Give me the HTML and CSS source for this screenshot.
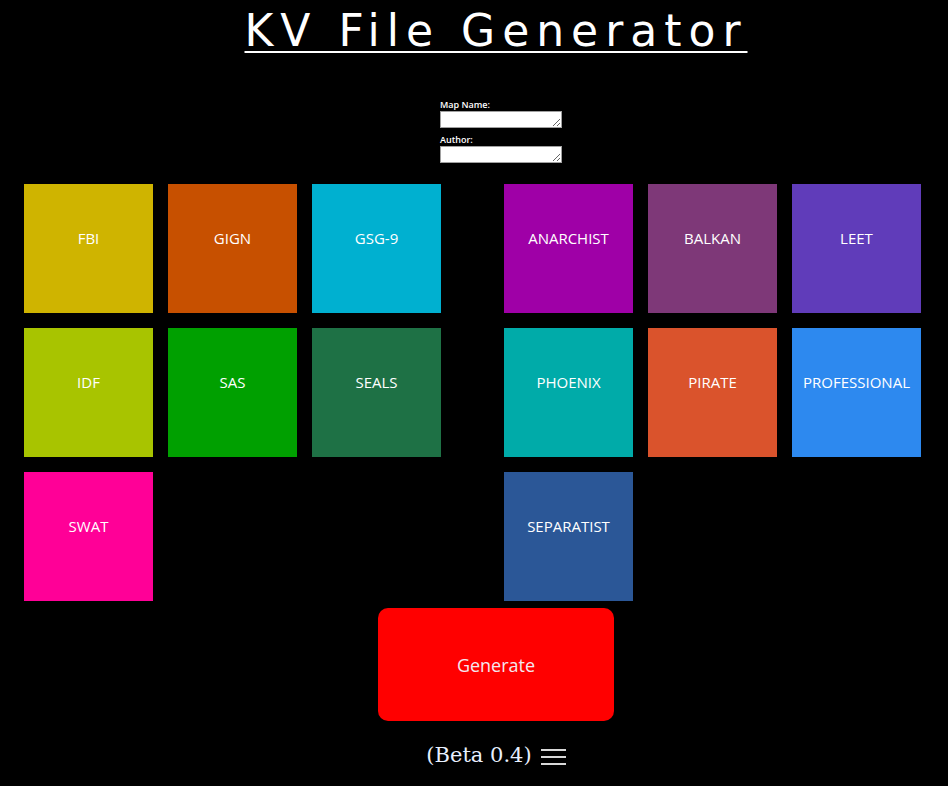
FILE: index.html
```html
<!DOCTYPE html>
<html>
<head>
<meta charset="utf-8">
<title>KV File Generator</title>
<link rel="stylesheet" href="styles.css">
</head>
<body>
<header class="header">
  <h1 class="title">KV File Generator</h1>
</header>
<form class="meta-form">
  <label class="field-label" for="mapname">Map Name:</label>
  <textarea class="field" id="mapname" rows="1"></textarea>
  <label class="field-label" for="author">Author:</label>
  <textarea class="field" id="author" rows="1"></textarea>
</form>
<main class="teams">
  <section class="group">
    <div class="tile c-fbi">FBI</div>
    <div class="tile c-gign">GIGN</div>
    <div class="tile c-gsg">GSG-9</div>
    <div class="tile c-idf">IDF</div>
    <div class="tile c-sas">SAS</div>
    <div class="tile c-seals">SEALS</div>
    <div class="tile c-swat">SWAT</div>
  </section>
  <section class="group">
    <div class="tile c-anarchist">ANARCHIST</div>
    <div class="tile c-balkan">BALKAN</div>
    <div class="tile c-leet">LEET</div>
    <div class="tile c-phoenix">PHOENIX</div>
    <div class="tile c-pirate">PIRATE</div>
    <div class="tile c-pro">PROFESSIONAL</div>
    <div class="tile c-separatist">SEPARATIST</div>
  </section>
</main>
<div class="actions">
  <button class="generate" type="button">Generate</button>
</div>
<footer class="footer">
  <span class="version">(Beta 0.4)</span>
  <svg class="menu-icon" width="25" height="18" viewBox="0 0 25 18" aria-hidden="true">
    <rect x="0" y="2" width="25" height="2" fill="#d8d8d8"/>
    <rect x="0" y="9" width="25" height="2" fill="#d8d8d8"/>
    <rect x="0" y="16" width="25" height="2" fill="#d8d8d8"/>
  </svg>
</footer>
</body>
</html>
```
FILE: styles.css
```css
html, body {
  margin: 0;
  padding: 0;
  background: #000;
  color: #fff;
  font-family: "Open Sans", "Noto Sans", sans-serif;
}

.header {
  display: flex;
  justify-content: center;
  padding-top: 6px;
}

.title {
  margin: 0;
  font-family: "DejaVu Sans", sans-serif;
  font-weight: normal;
  font-size: 44px;
  line-height: 50px;
  letter-spacing: 7px;
  text-decoration: underline;
  text-decoration-thickness: 2px;
  text-underline-offset: 5px;
  padding-left: 44px;
}

.meta-form {
  display: flex;
  flex-direction: column;
  align-items: flex-start;
  margin: 42px 0 0 440px;
  width: 122px;
}

.field-label {
  font-size: 9px;
  font-weight: 600;
  line-height: 13px;
  color: #fff;
}

.field {
  box-sizing: border-box;
  width: 122px;
  height: 17px;
  margin: 0 0 5px 0;
  padding: 0;
  border: 1px solid #a0a0a0;
  background: #fff;
  font-size: 10px;
  resize: both;
}

.teams {
  display: flex;
  gap: 63px;
  padding-left: 24px;
  margin-top: 16px;
}

.group {
  display: grid;
  grid-template-columns: repeat(3, 129px);
  grid-auto-rows: 129px;
  gap: 15px;
}

.tile {
  display: flex;
  justify-content: center;
  align-items: flex-start;
  padding-top: 44px;
  box-sizing: border-box;
  font-size: 15px;
  line-height: 20px;
  color: #fff;
}

.c-fbi { background: #cfb400; }
.c-gign { background: #c75000; }
.c-gsg { background: #00b0d0; }
.c-idf { background: #a8c400; }
.c-sas { background: #00a000; }
.c-seals { background: #1e7145; }
.c-swat { background: #ff0097; }
.c-anarchist { background: #9f00a7; }
.c-balkan { background: #7e3878; }
.c-leet { background: #603cba; }
.c-phoenix { background: #00aba9; }
.c-pirate { background: #da532c; }
.c-pro { background: #2d89ef; }
.c-separatist { background: #2b5797; }

.actions {
  display: flex;
  padding-left: 378px;
  margin-top: 7px;
}

.generate {
  width: 236px;
  height: 113px;
  border: none;
  border-radius: 10px;
  background: #ff0000;
  color: #f4e8f0;
  font-family: "Open Sans", "Noto Sans", sans-serif;
  font-size: 18px;
  padding: 0;
}

.footer {
  display: flex;
  align-items: center;
  justify-content: center;
  gap: 9px;
  margin-top: 19px;
  padding-left: 44px;
}

.version {
  font-family: "DejaVu Serif", serif;
  font-size: 21px;
  line-height: 30px;
  color: #e8f0ff;
}

.menu-icon {
  display: block;
  margin-top: 2px;
}
```
